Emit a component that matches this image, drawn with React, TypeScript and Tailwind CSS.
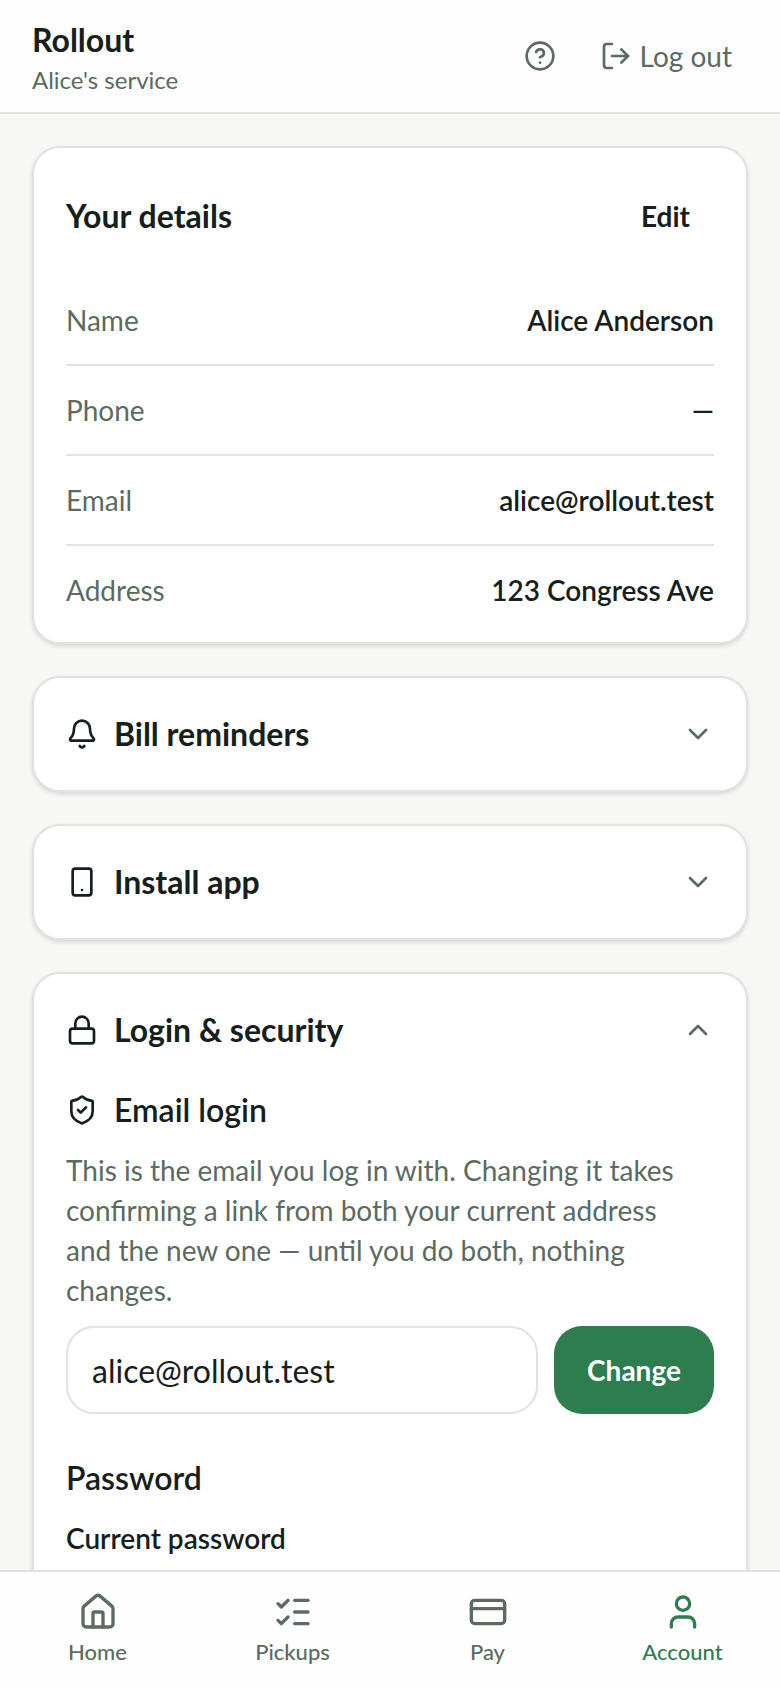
import { useState } from "react";
import {
  Bell,
  ChevronDown,
  ChevronUp,
  CircleHelp,
  CreditCard,
  House,
  ListChecks,
  Lock,
  LogOut,
  ShieldCheck,
  Smartphone,
  User,
  type LucideIcon,
} from "lucide-react";

const details = [
  { label: "Name", value: "Alice Anderson" },
  { label: "Phone", value: "—" },
  { label: "Email", value: "alice@rollout.test" },
  { label: "Address", value: "123 Congress Ave" },
];

const tabs = [
  { label: "Home", icon: House },
  { label: "Pickups", icon: ListChecks },
  { label: "Pay", icon: CreditCard },
  { label: "Account", icon: User, active: true },
];

function Card({ children }: { children: React.ReactNode }) {
  return (
    <section className="rounded-[28px] border-2 border-[#dde3dd] bg-white p-8 shadow-[0_2px_4px_rgba(22,32,27,0.14)]">
      {children}
    </section>
  );
}

function Disclosure({
  icon: Icon,
  title,
  defaultOpen = false,
  children,
}: {
  icon: LucideIcon;
  title: string;
  defaultOpen?: boolean;
  children?: React.ReactNode;
}) {
  const [open, setOpen] = useState(defaultOpen);
  const Chevron = open ? ChevronUp : ChevronDown;

  return (
    <Card>
      <h2>
        <button
          type="button"
          aria-expanded={open}
          onClick={() => setOpen((v) => !v)}
          className="flex w-full items-center gap-4 text-left text-[32px] leading-12 font-bold"
        >
          <Icon className="size-8 shrink-0" aria-hidden />
          <span className="flex-1">{title}</span>
          <Chevron className="size-8 shrink-0 text-[#5b6b60]" aria-hidden />
        </button>
      </h2>
      {open && children}
    </Card>
  );
}

export default function App() {
  const [email, setEmail] = useState("alice@rollout.test");
  const [password, setPassword] = useState("");

  return (
    <div className="flex h-dvh flex-col bg-[#f7f7f5] font-['Lato','Liberation_Sans',sans-serif] text-[#16201b]">
      <header className="flex items-center justify-between border-b-2 border-[#dde3dd] bg-[#fdfdfd] px-8 py-4">
        <div>
          <h1 className="text-[32px] leading-12 font-bold">Rollout</h1>
          <p className="text-2xl leading-8 text-[#5b6b60]">Alice's service</p>
        </div>
        <div className="flex items-center gap-2 text-[#5b6b60]">
          <button type="button" aria-label="Help" className="grid size-18 place-items-center rounded-3xl">
            <CircleHelp className="size-8" aria-hidden />
          </button>
          <button type="button" className="flex h-18 items-center gap-2 rounded-3xl px-4 text-[28px] leading-10">
            <LogOut className="size-8" aria-hidden />
            Log out
          </button>
        </div>
      </header>

      <main className="flex min-h-0 flex-1 flex-col gap-8 overflow-y-auto p-8 [scrollbar-width:none] *:shrink-0">
        <Card>
          <div className="mb-6 flex items-center justify-between">
            <h2 className="text-[32px] leading-12 font-bold">Your details</h2>
            <button type="button" className="h-18 rounded-3xl px-6 text-[28px] leading-10 font-bold">
              Edit
            </button>
          </div>
          <dl className="divide-y-2 divide-[#dde3dd]">
            {details.map((row) => (
              <div key={row.label} className="flex justify-between gap-4 py-6 text-[28px] leading-10 last:pb-0">
                <dt className="text-[#5b6b60]">{row.label}</dt>
                <dd className="text-right font-semibold">{row.value}</dd>
              </div>
            ))}
          </dl>
        </Card>

        <Disclosure icon={Bell} title="Bill reminders" />
        <Disclosure icon={Smartphone} title="Install app" />

        <Disclosure icon={Lock} title="Login & security" defaultOpen>
          <form className="mt-8" onSubmit={(e) => e.preventDefault()}>
            <label htmlFor="email" className="flex items-center gap-4 text-[32px] leading-12 font-semibold">
              <ShieldCheck className="size-8" aria-hidden />
              Email login
            </label>
            <p className="mt-4 pr-4 text-[28px] leading-10 text-[#5b6b60]">
              This is the email you log in with. Changing it takes confirming a link from both your
              current address and the new one — until you do both, nothing changes.
            </p>
            <div className="mt-4 flex gap-4">
              <input
                id="email"
                type="email"
                value={email}
                onChange={(e) => setEmail(e.target.value)}
                className="h-22 min-w-0 flex-1 rounded-[28px] border-2 border-[#dde3dd] bg-white px-6 text-[32px]"
              />
              <button
                type="submit"
                className="h-22 min-w-40 rounded-[28px] bg-[#2e7d4f] px-6 text-[28px] leading-10 font-bold text-white"
              >
                Change
              </button>
            </div>
          </form>

          <form className="mt-10" onSubmit={(e) => e.preventDefault()}>
            <h3 className="text-[32px] leading-12 font-semibold">Password</h3>
            <label htmlFor="current-password" className="mt-4 block text-[28px] leading-10 font-semibold">
              Current password
            </label>
            <input
              id="current-password"
              type="password"
              value={password}
              onChange={(e) => setPassword(e.target.value)}
              autoComplete="current-password"
              className="mt-3 h-22 w-full rounded-[28px] border-2 border-[#dde3dd] bg-white px-6 text-[32px]"
            />
          </form>
        </Disclosure>
      </main>

      <nav className="grid grid-cols-4 border-t-2 border-[#dde3dd] bg-[#fefefe] py-5">
        {tabs.map(({ label, icon: Icon, active }) => (
          <a
            key={label}
            href={`#${label.toLowerCase()}`}
            aria-current={active ? "page" : undefined}
            className={`flex flex-col items-center gap-1 text-[22px] leading-8 font-medium ${
              active ? "text-[#2e7d4f]" : "text-[#5b6b60]"
            }`}
          >
            <Icon className="size-10" aria-hidden />
            {label}
          </a>
        ))}
      </nav>
    </div>
  );
}
